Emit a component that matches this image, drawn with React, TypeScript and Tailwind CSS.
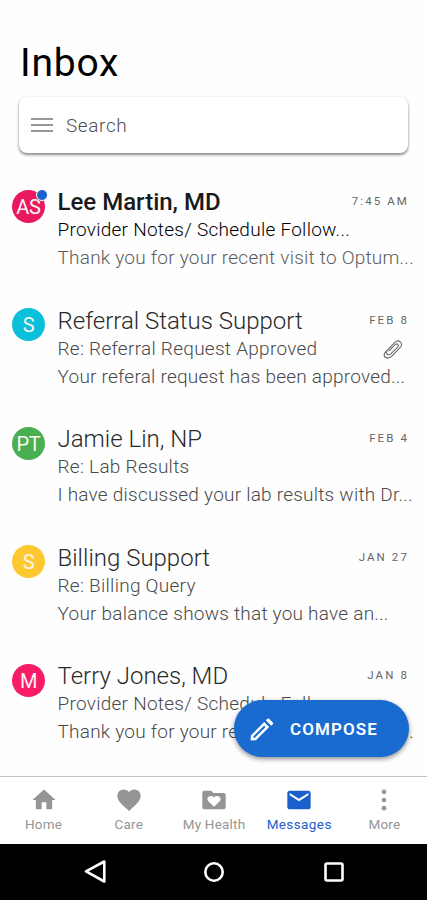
import clsx from 'clsx';
import { ReactNode } from 'react';

interface Message {
  id: number;
  initials: string;
  color: string;
  sender: string;
  subject: string;
  preview: string;
  date: string;
  unread?: boolean;
  attachment?: boolean;
}

const MESSAGES: Message[] = [
  {
    id: 1,
    initials: 'AS',
    color: 'bg-[#e91860]',
    sender: 'Lee Martin, MD',
    subject: 'Provider Notes/ Schedule Follow...',
    preview: 'Thank you for your recent visit to Optum...',
    date: '7:45 AM',
    unread: true
  },
  {
    id: 2,
    initials: 'S',
    color: 'bg-[#08c0da]',
    sender: 'Referral Status Support',
    subject: 'Re: Referral Request Approved',
    preview: 'Your referal request has been approved...',
    date: 'FEB 8',
    attachment: true
  },
  {
    id: 3,
    initials: 'PT',
    color: 'bg-[#48b052]',
    sender: 'Jamie Lin, NP',
    subject: 'Re: Lab Results',
    preview: 'I have discussed your lab results with Dr...',
    date: 'FEB 4'
  },
  {
    id: 4,
    initials: 'S',
    color: 'bg-[#fdc830]',
    sender: 'Billing Support',
    subject: 'Re: Billing Query',
    preview: 'Your balance shows that you have an...',
    date: 'JAN 27'
  },
  {
    id: 5,
    initials: 'M',
    color: 'bg-[#f81b68]',
    sender: 'Terry Jones, MD',
    subject: 'Provider Notes/ Schedule Follow...',
    preview: 'Thank you for your recent visit to Optum...',
    date: 'JAN 8'
  }
];

function Icon({ size = 28, children }: { size?: number; children: ReactNode }) {
  return (
    <svg width={size} height={size} viewBox="0 0 24 24" fill="currentColor">
      {children}
    </svg>
  );
}

function Paperclip() {
  return (
    <svg width="20" height="20" viewBox="0 0 20 20" fill="none" stroke="#6a6a6a" strokeWidth="1.1" strokeLinecap="round" strokeLinejoin="round">
      <path d="m5.800 11.800 6.400-6.200c2-1.700 4.200.5 2.400 2.500l-6.800 6.800c-2.600 2.200-5.900-.8-3.700-3.500l7.900-8.200c3.600-3.400 8.600.8 5.500 4.900l-8.400 8.800c-3 2.900-8.200 2.800-7.900-1.300.1-1.600 1.400-2.700 2.400-3.700" />
    </svg>
  );
}

function MessageRow({ message }: { message: Message }) {
  const { unread } = message;
  return (
    <li className="flex h-[118.5px] pl-3">
      <div
        className={clsx(
          'relative mt-[1.5px] flex size-[33px] shrink-0 items-center justify-center rounded-full pt-px text-[20px] tracking-[-0.300px] text-[#fff5f5]',
          message.color
        )}
      >
        {message.initials}
        {unread && (
          <span className="absolute -top-[1px] -right-[3px] size-[12px] rounded-full border border-white bg-[#1c62cc]" />
        )}
      </div>
      <div className="ml-[12.5px] min-w-0 flex-1 leading-7 whitespace-nowrap">
        <div className="flex justify-between pr-[18px]">
          <h2 className={clsx('text-2xl leading-7', unread ? 'font-medium text-[#1a1a1a]' : 'font-light text-[#2a2a2a]')}>
            {message.sender}
          </h2>
          <time className="text-[11.500px] leading-[27px] tracking-[2.100px] text-[#666]">{message.date}</time>
        </div>
        <div className="flex justify-between pr-[24px]">
          <p className={clsx('text-[19px] font-light tracking-[0.270px]', unread ? 'text-black' : 'text-[#4a4a4a]')}>
            {message.subject}
          </p>
          {message.attachment && (
            <span className="flex items-center">
              <Paperclip />
            </span>
          )}
        </div>
        <p className={clsx('text-[19px] font-light tracking-[0.230px]', unread ? 'text-[#5c5c5c]' : 'text-[#4a4a4a]')}>
          {message.preview}
        </p>
      </div>
    </li>
  );
}

const TABS = [
  { label: 'Home', icon: <path d="M10 20v-6h4v6h5v-8h3L12 3 2 12h3v8z" /> },
  {
    label: 'Care',
    icon: (
      <path d="m12 21.350-1.450-1.320C5.400 15.360 2 12.280 2 8.500 2 5.420 4.420 3 7.500 3c1.740 0 3.410.810 4.500 2.090C13.090 3.810 14.760 3 16.500 3 19.580 3 22 5.420 22 8.500c0 3.780-3.400 6.860-8.550 11.540z" />
    )
  },
  {
    label: 'My Health',
    icon: (
      <>
        <path d="M3.500 4h6l2 2h9A1.500 1.500 0 0 1 22 7.500v11a1.500 1.500 0 0 1-1.500 1.500h-17A1.500 1.500 0 0 1 2 18.500v-13A1.500 1.500 0 0 1 3.500 4" />
        <path
          fill="#fff"
          d="M12 17.800 7.300 13.200a2.700 2.700 0 0 1 0-3.900c1.300-1.200 3.500-1.100 4.700.5 1.200-1.600 3.400-1.700 4.700-.5a2.700 2.700 0 0 1 0 3.900z"
        />
      </>
    )
  },
  {
    label: 'Messages',
    active: true,
    icon: <path d="M20 4H4c-1.100 0-2 .9-2 2v12c0 1.100.9 2 2 2h16c1.100 0 2-.9 2-2V6c0-1.100-.9-2-2-2m0 4-8 5-8-5V6l8 5 8-5z" />
  },
  {
    label: 'More',
    icon: (
      <>
        <circle cx="12" cy="5" r="2" />
        <circle cx="12" cy="12" r="2" />
        <circle cx="12" cy="19" r="2" />
      </>
    )
  }
];

function TabBar() {
  return (
    <nav className="grid h-[68px] shrink-0 grid-cols-5 border-t-[1.500px] border-[#c4c4c4] bg-white pl-px">
      {TABS.map(tab => (
        <div
          key={tab.label}
          className={clsx('flex flex-col items-center pt-[9px] whitespace-nowrap', tab.active ? 'text-[#1a60cc]' : 'text-[#959595]')}
        >
          <Icon>{tab.icon}</Icon>
          <span className={clsx('mt-[2px] text-[13.500px] leading-4', tab.active ? 'tracking-[0.400px]' : 'tracking-[0.200px]')}>
            {tab.label}
          </span>
        </div>
      ))}
    </nav>
  );
}

function SystemBar() {
  return (
    <div className="h-14 shrink-0 bg-black">
      <svg width="427" height="56" viewBox="0 0 427 56" fill="none" stroke="#fff" strokeWidth="2.600" strokeLinejoin="round">
        <path d="M104.300 17.500v20L86 27.300z" />
        <circle cx="214" cy="28" r="8.700" />
        <rect x="325.500" y="19.500" width="17" height="17" rx="1.500" />
      </svg>
    </div>
  );
}

export default function App() {
  return (
    <div className="relative flex h-[900px] w-[427px] flex-col overflow-hidden bg-[#fefefe] font-['Roboto',sans-serif]">
      <header className="shrink-0 px-[19px] pt-[39px]">
        <h1 className="pl-px text-[39px] leading-[48px] tracking-[0.800px] text-black">Inbox</h1>
        <div className="mt-[10px] flex h-14 items-center rounded-[8px] bg-white pl-3 shadow-[0_2px_3px_rgba(0,0,0,0.45),0_0_2px_rgba(0,0,0,0.1)]">
          <svg width="22" height="16" viewBox="0 0 22 16" stroke="#999" strokeWidth="2">
            <path d="M0 2h22M0 8h22M0 14h22" />
          </svg>
          <span className="mt-[2px] ml-[13px] text-[19px] font-light tracking-[0.600px] text-[#505050]">Search</span>
        </div>
      </header>

      <ul className="mt-[35px] min-h-0 flex-1 overflow-hidden">
        {MESSAGES.map(m => (
          <MessageRow key={m.id} message={m} />
        ))}
      </ul>

      <button className="absolute top-[700px] left-[234px] flex h-[57px] w-[175px] items-center rounded-full bg-[#196bd0] pl-[14px] text-white shadow-[0_2px_5px_rgba(0,0,0,0.45)]">
        <svg width="28" height="28" viewBox="0 0 28 28" fill="currentColor">
          <path d="M3 20.200 16.200 7l5 5L8 25.200 4.200 25.500Q2.500 25.600 2.600 24zM17.900 5.300l1.500-1.500q.8-.8 1.600 0l3.800 3.800q.8.800 0 1.600l-1.600 1.500z" />
          <path d="M6.300 21.900 16.200 12" stroke="#196bd0" strokeWidth="2" strokeLinecap="round" />
        </svg>
        <span className="mt-[2px] ml-[14px] text-[17px] font-semibold tracking-[1.100px]">COMPOSE</span>
      </button>

      <TabBar />
      <SystemBar />
    </div>
  );
}
